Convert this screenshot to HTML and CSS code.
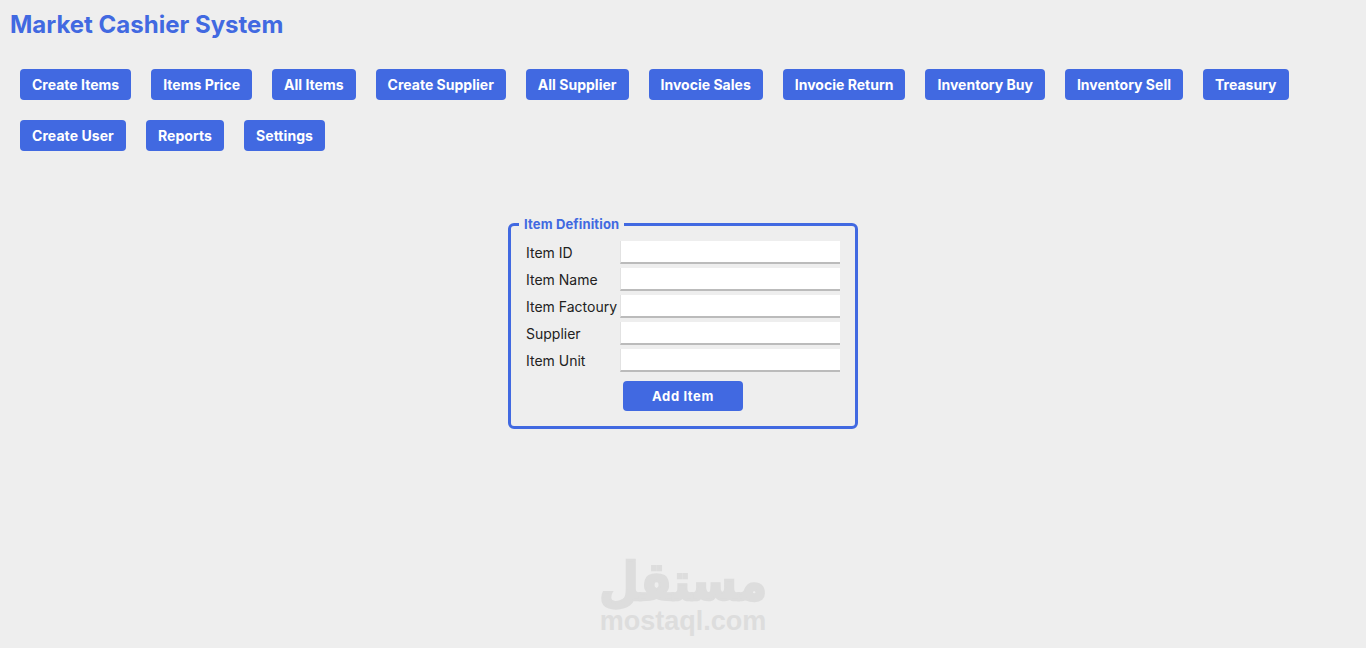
FILE: index.html
```html
<!DOCTYPE html>
<html lang="en">
<head>
  <meta charset="UTF-8" />
  <meta name="viewport" content="width=device-width, initial-scale=1" />
  <title>Market Cashier System</title>
  <link rel="stylesheet" href="styles.css">
</head>
<body>

<h1>Market Cashier System</h1>

<nav class="menu">
  <button class="menuBtn">Create Items</button>
  <button class="menuBtn">Items Price</button>
  <button class="menuBtn">All Items</button>
  <button class="menuBtn">Create Supplier</button>
  <button class="menuBtn">All Supplier</button>
  <button class="menuBtn">Invocie Sales</button>
  <button class="menuBtn">Invocie Return</button>
  <button class="menuBtn">Inventory Buy</button>
  <button class="menuBtn">Inventory Sell</button>
  <button class="menuBtn">Treasury</button>
  <button class="menuBtn">Create User</button>
  <button class="menuBtn">Reports</button>
  <button class="menuBtn">Settings</button>
</nav>

<form class="itemForm">
  <fieldset>
    <legend>Item Definition</legend>
    <div class="row"><label>Item ID</label><input type="text"></div>
    <div class="row"><label>Item Name</label><input type="text"></div>
    <div class="row"><label>Item Factoury</label><input type="text"></div>
    <div class="row"><label>Supplier</label><input type="text"></div>
    <div class="row"><label>Item Unit</label><input type="text"></div>
    <button type="button" class="addBtn">Add Item</button>
  </fieldset>
</form>

<div class="watermark">
  <div class="wmArabic" lang="ar" dir="rtl">مستقل</div>
  <div class="wmLatin">mostaql.com</div>
</div>

</body>
</html>
```

FILE: styles.css
```css
* {
  box-sizing: border-box;
}
html, body {
  height: 100%;
}
body {
  font-family: Inter, 'Noto Sans', sans-serif;
  background: #eeeeee;
  color: #222;
  margin: 0;
  padding: 0;
  overflow: hidden;
}
h1 {
  margin: 0;
  padding: 10px 0 0 10px;
  font-size: 24px;
  line-height: 29px;
  font-weight: 700;
  color: royalblue;
}
.menu {
  display: flex;
  flex-wrap: wrap;
  gap: 20px;
  padding: 30px 20px 0;
}
.menuBtn {
  height: 31px;
  padding: 0 12px;
  font-family: inherit;
  font-size: 14px;
  font-weight: 700;
  letter-spacing: 0.012px;
  color: #fff;
  background: royalblue;
  border: none;
  border-radius: 4px;
  cursor: pointer;
}
/* second row runs a little wider */
.menuBtn:nth-child(n+11) {
  letter-spacing: 0.07px;
}
.itemForm {
  width: 350px;
  margin: 65px auto 0;
}
fieldset {
  margin: 0;
  padding: 9px 15px 15px;
  border: 3px solid royalblue;
  border-radius: 6px;
}
legend {
  margin-left: -7px;
  padding: 0 5px;
  font-size: 13px;
  line-height: 16px;
  font-weight: 700;
  letter-spacing: 0.15px;
  color: royalblue;
}
.row {
  display: flex;
  align-items: center;
  height: 23px;
  margin-bottom: 4px;
}
.row label {
  width: 94px;
  flex: none;
  font-size: 14px;
  white-space: nowrap;
}
.row input {
  width: 220px;
  height: 23px;
  padding: 0 4px;
  background: #fff;
  border: none;
  border-left: 1px solid #e2e2e2;
  border-bottom: 2px solid #bbb;
  outline: none;
}
.addBtn {
  display: block;
  width: 120px;
  height: 30px;
  margin: 9px 0 0 97px;
  font-family: inherit;
  font-size: 13px;
  font-weight: 700;
  letter-spacing: 0.6px;
  color: #fff;
  background: royalblue;
  border: none;
  border-radius: 4px;
  cursor: pointer;
}
.watermark {
  position: absolute;
  left: 583px;
  top: 559px;
  width: 200px;
  text-align: center;
  color: #dddddd;
  font-weight: 700;
}
.wmArabic {
  font-family: 'DejaVu Sans', sans-serif;
  font-size: 46px;
  line-height: 46px;
  -webkit-text-stroke: 2px #dddddd;
  transform: scaleY(1.15);
}
.wmLatin {
  margin-top: 4px;
  font-family: 'Liberation Sans', sans-serif;
  font-size: 27px;
  line-height: 24px;
}
```
